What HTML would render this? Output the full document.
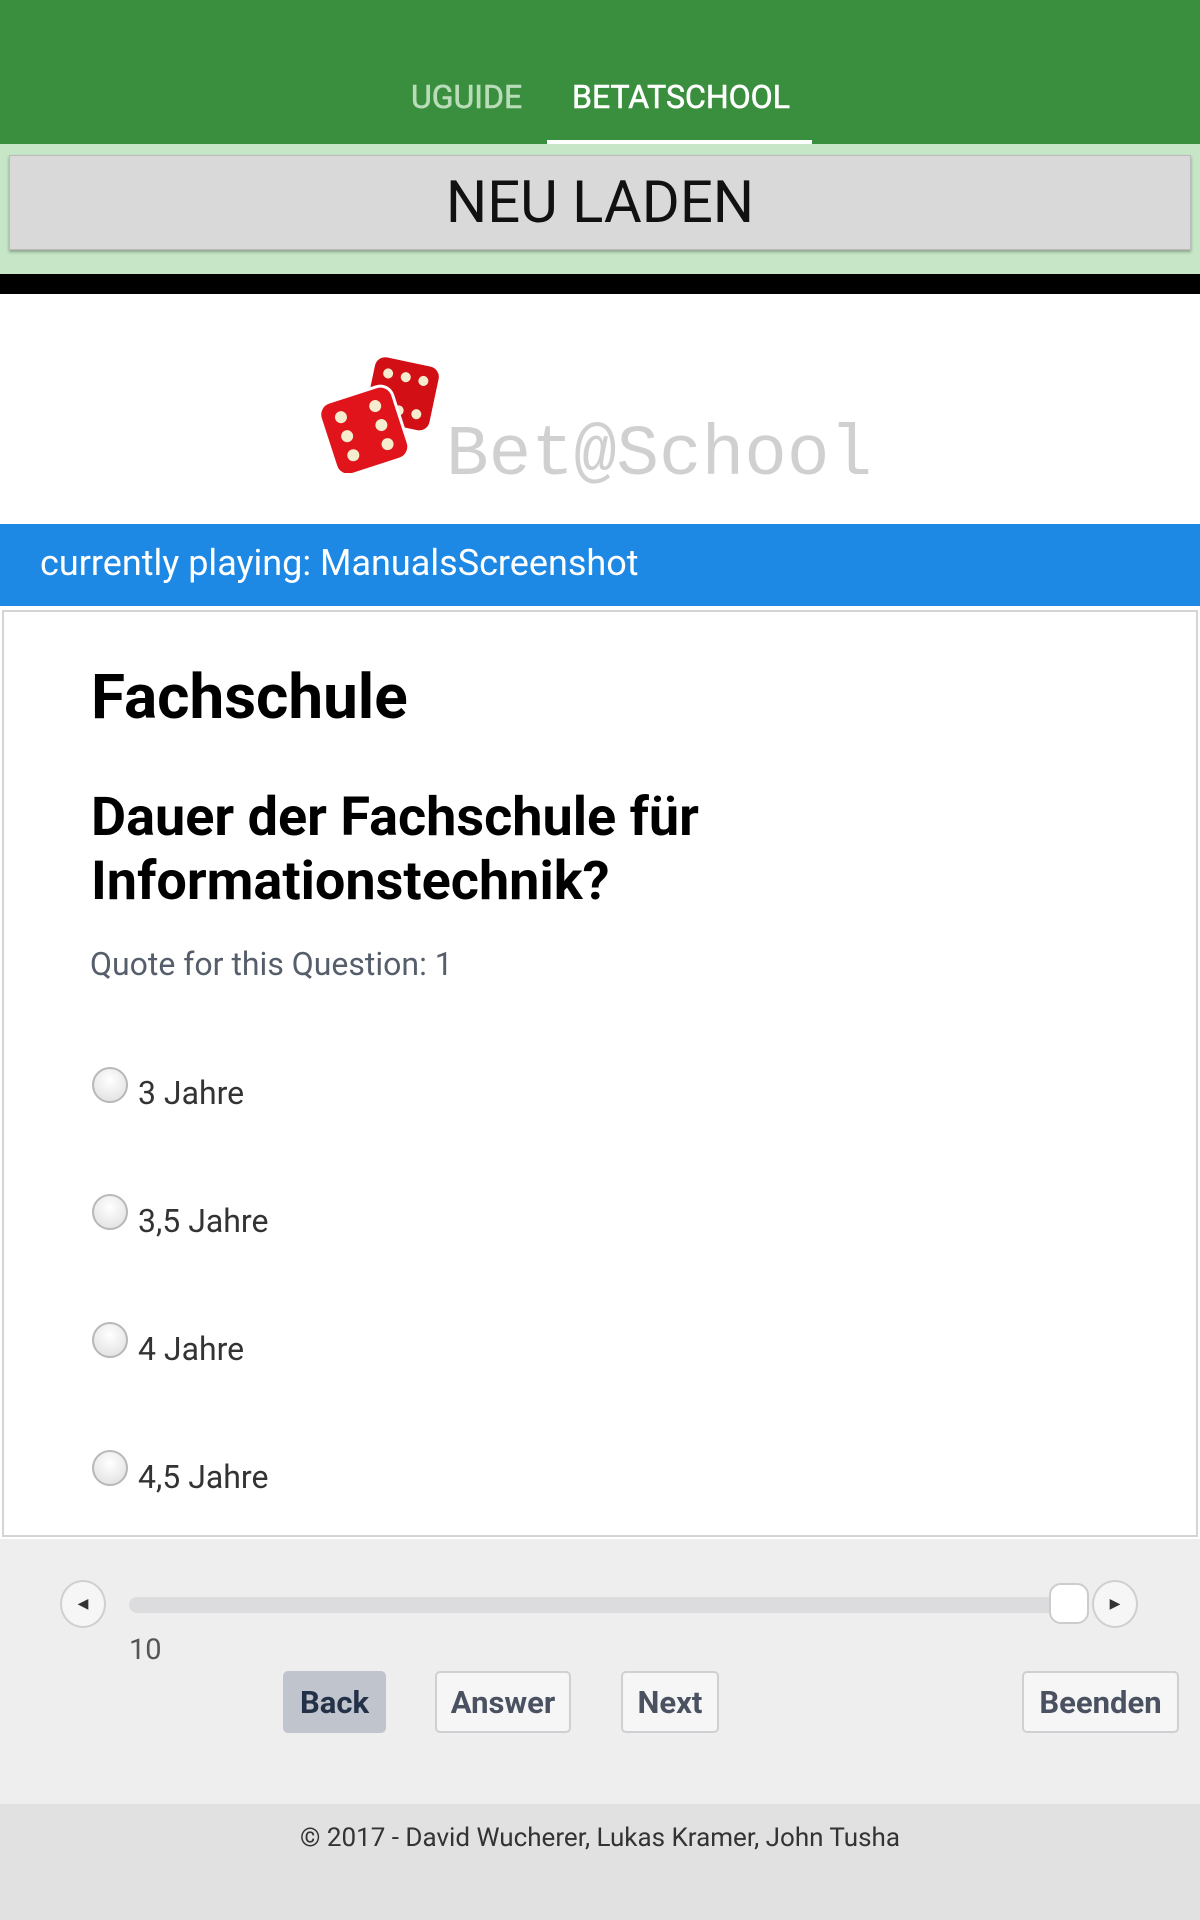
<!DOCTYPE html>
<html><head><meta charset="utf-8"><style>
*{margin:0;padding:0;box-sizing:border-box}
body{width:1200px;height:1920px;position:relative;background:#fff;font-family:"Roboto","Liberation Sans",sans-serif;overflow:hidden}
.a{position:absolute}
.btn{position:absolute;top:1671px;height:62px;border:2px solid #d0d0d4;border-radius:5px;background:#f6f6f6;color:#4a5262;font-weight:bold;font-size:31px;display:flex;align-items:center;justify-content:center}
.r{position:absolute;left:92px;width:36px;height:36px;border-radius:50%;border:2px solid #b8b8b8;background:radial-gradient(circle at 50% 35%,#fff,#ddd)}
.l{position:absolute;left:138px;font-size:32px;color:#333}
</style></head><body>
<div class="a" style="left:0;top:0;width:1200px;height:144px;background:#3a8f3e"></div>
<div class="a" style="left:411px;top:78px;font-size:32px;color:#b9dcb9;-webkit-text-stroke:0.6px #b9dcb9">UGUIDE</div>
<div class="a" style="left:572px;top:78px;font-size:32px;color:#fff;-webkit-text-stroke:0.6px #fff">BETATSCHOOL</div>
<div class="a" style="left:547px;top:140px;width:265px;height:4px;background:#fff"></div>
<div class="a" style="left:0;top:144px;width:1200px;height:130px;background:#c6e6c7"></div>
<div class="a" style="left:9px;top:155px;width:1182px;height:95px;background:#d9d9d9;border:1px solid #bbb;box-shadow:0 2px 3px rgba(0,0,0,.3);display:flex;align-items:center;justify-content:center;font-size:58px;color:#111">NEU LADEN</div>
<div class="a" style="left:0;top:274px;width:1200px;height:20px;background:#000"></div>
<svg class="a" style="left:318px;top:355px" width="122" height="118" viewBox="0 0 122 118">
<g transform="rotate(12 85 40)"><rect x="50" y="5" width="68" height="68" rx="12" fill="#d10f14" stroke="#fff" stroke-width="3"/>
<g fill="#f5ecd0"><circle cx="66" cy="22" r="5"/><circle cx="84" cy="22" r="5"/><circle cx="102" cy="22" r="5"/><circle cx="66" cy="56" r="5"/><circle cx="84" cy="56" r="5"/><circle cx="102" cy="56" r="5"/></g></g>
<g transform="rotate(-18 45 75)"><rect x="8" y="38" width="76" height="76" rx="13" fill="#e0141a" stroke="#fff" stroke-width="3"/>
<g fill="#f5ecd0"><circle cx="28" cy="56" r="6"/><circle cx="28" cy="76" r="6"/><circle cx="28" cy="96" r="6"/><circle cx="64" cy="56" r="6"/><circle cx="64" cy="76" r="6"/><circle cx="64" cy="96" r="6"/></g></g>
</svg>
<div class="a" style="left:446px;top:416px;font-family:'Liberation Mono',monospace;font-size:71px;color:#d0d0d0;line-height:80px">Bet@School</div>
<div class="a" style="left:0;top:524px;width:1200px;height:82px;background:#1e88e5"></div>
<div class="a" style="left:40px;top:542px;font-size:36px;color:#fff">currently playing: ManualsScreenshot</div>
<div class="a" style="left:2px;top:610px;width:1196px;height:927px;border:2px solid #d4d4d4;background:#fff"></div>
<div class="a" style="left:91px;top:661px;font-size:62px;font-weight:bold;color:#000">Fachschule</div>
<div class="a" style="left:91px;top:786px;font-size:54px;font-weight:bold;color:#000;line-height:64px">Dauer der Fachschule für<br>Informationstechnik?</div>
<div class="a" style="left:90px;top:945px;font-size:32px;color:#555e6a">Quote for this Question: 1</div>
<div class="r" style="top:1067px"></div><div class="l" style="top:1074px">3 Jahre</div>
<div class="r" style="top:1194px"></div><div class="l" style="top:1202px">3,5 Jahre</div>
<div class="r" style="top:1322px"></div><div class="l" style="top:1330px">4 Jahre</div>
<div class="r" style="top:1450px"></div><div class="l" style="top:1458px">4,5 Jahre</div>
<div class="a" style="left:0;top:1539px;width:1200px;height:265px;background:#eeeeee"></div>
<div class="a" style="left:60px;top:1580px;width:46px;height:48px;border-radius:50%;border:2px solid #d0d0d0;background:#f6f6f6;font-size:14px;color:#333;display:flex;align-items:center;justify-content:center">◀</div>
<div class="a" style="left:129px;top:1597px;width:936px;height:16px;border-radius:8px;background:#dcdcde"></div>
<div class="a" style="left:1049px;top:1583px;width:40px;height:41px;border-radius:12px;border:2px solid #ccc;background:#fff"></div>
<div class="a" style="left:1092px;top:1580px;width:46px;height:48px;border-radius:50%;border:2px solid #d0d0d0;background:#f6f6f6;font-size:14px;color:#333;display:flex;align-items:center;justify-content:center">▶</div>
<div class="a" style="left:129px;top:1633px;font-size:29px;color:#555">10</div>
<div class="btn" style="left:283px;width:103px;background:#c0c4cc;color:#223048;border-color:#c0c4cc">Back</div>
<div class="btn" style="left:435px;width:136px">Answer</div>
<div class="btn" style="left:621px;width:98px">Next</div>
<div class="btn" style="left:1022px;width:157px">Beenden</div>
<div class="a" style="left:0;top:1804px;width:1200px;height:116px;background:#e1e1e1"></div>
<div class="a" style="left:0;top:1823px;width:1200px;text-align:center;font-size:26px;color:#333">© 2017 - David Wucherer, Lukas Kramer, John Tusha</div>
</body></html>
